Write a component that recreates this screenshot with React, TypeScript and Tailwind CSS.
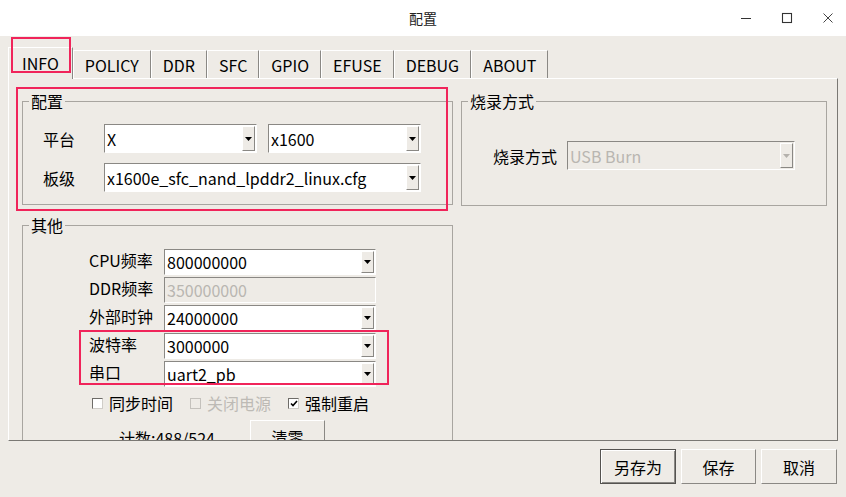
import React from "react";

const FONT = "font-['Noto_Sans_CJK_SC','Noto_Sans',sans-serif]";

function Arrow({ disabled }: { disabled?: boolean }) {
  return (
    <div className="my-px mr-px flex w-[13px] items-center justify-center border border-b-[#8a8884] border-l-white border-r-[#8a8884] border-t-white bg-[#eeebe6]">
      <svg width="7" height="4" viewBox="0 0 7 4">
        <path d="M0 0h7L3.5 4z" fill={disabled ? "#b4b1ac" : "#000"} />
      </svg>
    </div>
  );
}

function Combo({
  value,
  className,
  disabled,
  arrow = true,
}: {
  value: string;
  className: string;
  disabled?: boolean;
  arrow?: boolean;
}) {
  return (
    <div
      className={`flex border border-b-white border-l-[#8a8884] border-r-white border-t-[#8a8884] ${
        disabled ? "bg-[#eeebe6] text-[#b9b6b1]" : "bg-white text-black"
      } ${className}`}
    >
      <div className="flex flex-1 items-center overflow-hidden whitespace-nowrap pl-[2px] text-[16px]">{value}</div>
      {arrow && <Arrow disabled={disabled} />}
    </div>
  );
}

function Check({ label, checked, disabled }: { label: string; checked?: boolean; disabled?: boolean }) {
  return (
    <div className={`flex items-center gap-[6px] ${disabled ? "text-[#bdbab5]" : "text-black"}`}>
      <div
        className={`flex h-[11px] w-[11px] items-center justify-center border ${
          disabled ? "border-[#c4c1bc] bg-[#eeebe6]" : "border-b-[#d0cdc8] border-l-[#6e6c68] border-r-[#d0cdc8] border-t-[#6e6c68] bg-white"
        }`}
      >
        {checked && (
          <svg width="8" height="7" viewBox="0 0 8 7">
            <path d="M1 3.5l2 2L7 1" stroke="#000" strokeWidth="1.6" fill="none" />
          </svg>
        )}
      </div>
      <span className="text-[16px]">{label}</span>
    </div>
  );
}

function Button({ label, primary, className }: { label: string; primary?: boolean; className: string }) {
  return (
    <div
      className={`flex items-center justify-center text-[16px] ${
        primary
          ? "border border-[#555350] shadow-[inset_1px_1px_0_#fff,inset_-1px_-1px_0_#8a8884]"
          : "border border-b-[#8a8884] border-l-white border-r-[#8a8884] border-t-white"
      } ${className}`}
    >
      {label}
    </div>
  );
}

function Group({ title, className, children }: { title: string; className: string; children: React.ReactNode }) {
  return (
    <fieldset className={`border border-[#a8a5a0] ${className}`}>
      <legend className="ml-[6px] px-[2px] text-[16px] leading-[20px]">{title}</legend>
      {children}
    </fieldset>
  );
}

const tabs = ["INFO", "POLICY", "DDR", "SFC", "GPIO", "EFUSE", "DEBUG", "ABOUT"];

export default function App() {
  return (
    <div className={`flex h-[497px] w-[846px] flex-col overflow-hidden bg-[#eeebe6] text-black ${FONT}`}>
      {/* title bar */}
      <div className="relative flex h-[36px] items-center justify-center bg-white text-[14px] text-[#222]">
        <span>配置</span>
        <div className="absolute right-[8px] top-0 flex h-full items-center gap-[29px] pr-[4px]">
          <svg width="12" height="12" viewBox="0 0 12 12">
            <path d="M1 6.5h10" stroke="#333" strokeWidth="1" />
          </svg>
          <svg width="12" height="12" viewBox="0 0 12 12">
            <rect x="1.5" y="1.5" width="9" height="9" stroke="#333" fill="none" strokeWidth="1.1" />
          </svg>
          <svg width="12" height="12" viewBox="0 0 12 12">
            <path d="M1.5 1.5l9 9M10.5 1.5l-9 9" stroke="#444" strokeWidth="1" />
          </svg>
        </div>
      </div>

      <div className="flex flex-1 flex-col px-[8px] pt-[12px]">
        {/* tabs */}
        <div className="relative z-10 flex h-[30px] items-end">
          {tabs.map((t, i) => (
            <div
              key={t}
              className={`relative flex items-center border-l border-r border-t border-l-white border-r-[#8a8884] border-t-white text-[16px] ${
                i === 0 ? "-mb-px h-[32px] bg-[#eeebe6] px-[13px] pb-[2px]" : "h-[28px] px-[11px]"
              }`}
            >
              {t}
              {i === 0 && (
                <div className="absolute -top-[11px] left-[2px] h-[36px] w-[60px] border-2 border-[#f0245a]" />
              )}
            </div>
          ))}
        </div>

        {/* notebook panel */}
        <div className="relative h-[363px] overflow-hidden border border-b-[#7a7874] border-l-white border-r-[#7a7874] border-t-white pl-[13px] pt-[12px]">
          <div className="flex gap-[8px]">
            <div className="relative w-[431px]">
              <Group title="配置" className="h-[114px]">
                <div className="flex flex-col gap-[10px] pl-[20px] pt-[13px]">
                  <div className="flex items-center">
                    <span className="w-[61px] text-[16px]">平台</span>
                    <Combo value="X" className="h-[29px] w-[153px]" />
                    <Combo value="x1600" className="ml-[11px] h-[29px] w-[153px]" />
                  </div>
                  <div className="flex items-center">
                    <span className="w-[61px] text-[16px]">板级</span>
                    <Combo value="x1600e_sfc_nand_lpddr2_linux.cfg" className="h-[29px] w-[317px]" />
                  </div>
                </div>
              </Group>
              <div className="absolute -left-[6px] -top-[4px] h-[124px] w-[432px] border-2 border-[#f0245a]" />

              <Group title="其他" className="mt-[10px] h-[260px]">
                <div className="pl-[66px] pt-[14px]">
                  <div className="relative flex flex-col gap-[2px]">
                    <div className="flex items-center">
                      <span className="w-[75px] -translate-y-[2px] text-[16px]">CPU频率</span>
                      <Combo value="800000000" className="h-[26px] w-[212px]" />
                    </div>
                    <div className="flex items-center">
                      <span className="w-[75px] -translate-y-[2px] text-[16px]">DDR频率</span>
                      <Combo value="350000000" className="h-[26px] w-[212px]" disabled arrow={false} />
                    </div>
                    <div className="flex items-center">
                      <span className="w-[75px] -translate-y-[2px] text-[16px]">外部时钟</span>
                      <Combo value="24000000" className="h-[26px] w-[212px]" />
                    </div>
                    <div className="flex items-center">
                      <span className="w-[75px] -translate-y-[2px] text-[16px]">波特率</span>
                      <Combo value="3000000" className="h-[26px] w-[212px]" />
                    </div>
                    <div className="flex items-center">
                      <span className="w-[75px] -translate-y-[2px] text-[16px]">串口</span>
                      <Combo value="uart2_pb" className="h-[26px] w-[212px]" />
                    </div>
                    <div className="absolute -left-[10px] top-[81px] h-[55px] w-[310px] border-2 border-[#f0245a]" />
                  </div>
                  <div className="ml-[3px] mt-[4px] flex items-center gap-[17px]">
                    <Check label="同步时间" />
                    <Check label="关闭电源" disabled />
                    <Check label="强制重启" checked />
                  </div>
                  <div className="mt-[5px] flex items-start">
                    <span className="ml-[30px] mt-[6px] text-[16px]">计数:488/524</span>
                    <Button label="清零" className="ml-[35px] h-[34px] w-[75px]" />
                  </div>
                </div>
              </Group>
            </div>

            <Group title="烧录方式" className="h-[115px] w-[366px]">
              <div className="flex items-center pl-[31px] pt-[30px]">
                <span className="w-[74px] text-[16px]">烧录方式</span>
                <Combo value="USB Burn" className="h-[29px] w-[228px]" disabled />
              </div>
            </Group>
          </div>
        </div>

        {/* bottom buttons */}
        <div className="mt-[8px] flex justify-end gap-[5px] pr-[1px]">
          <Button label="另存为" primary className="h-[35px] w-[76px]" />
          <Button label="保存" className="h-[35px] w-[75px]" />
          <Button label="取消" className="h-[35px] w-[76px]" />
        </div>
      </div>
    </div>
  );
}
